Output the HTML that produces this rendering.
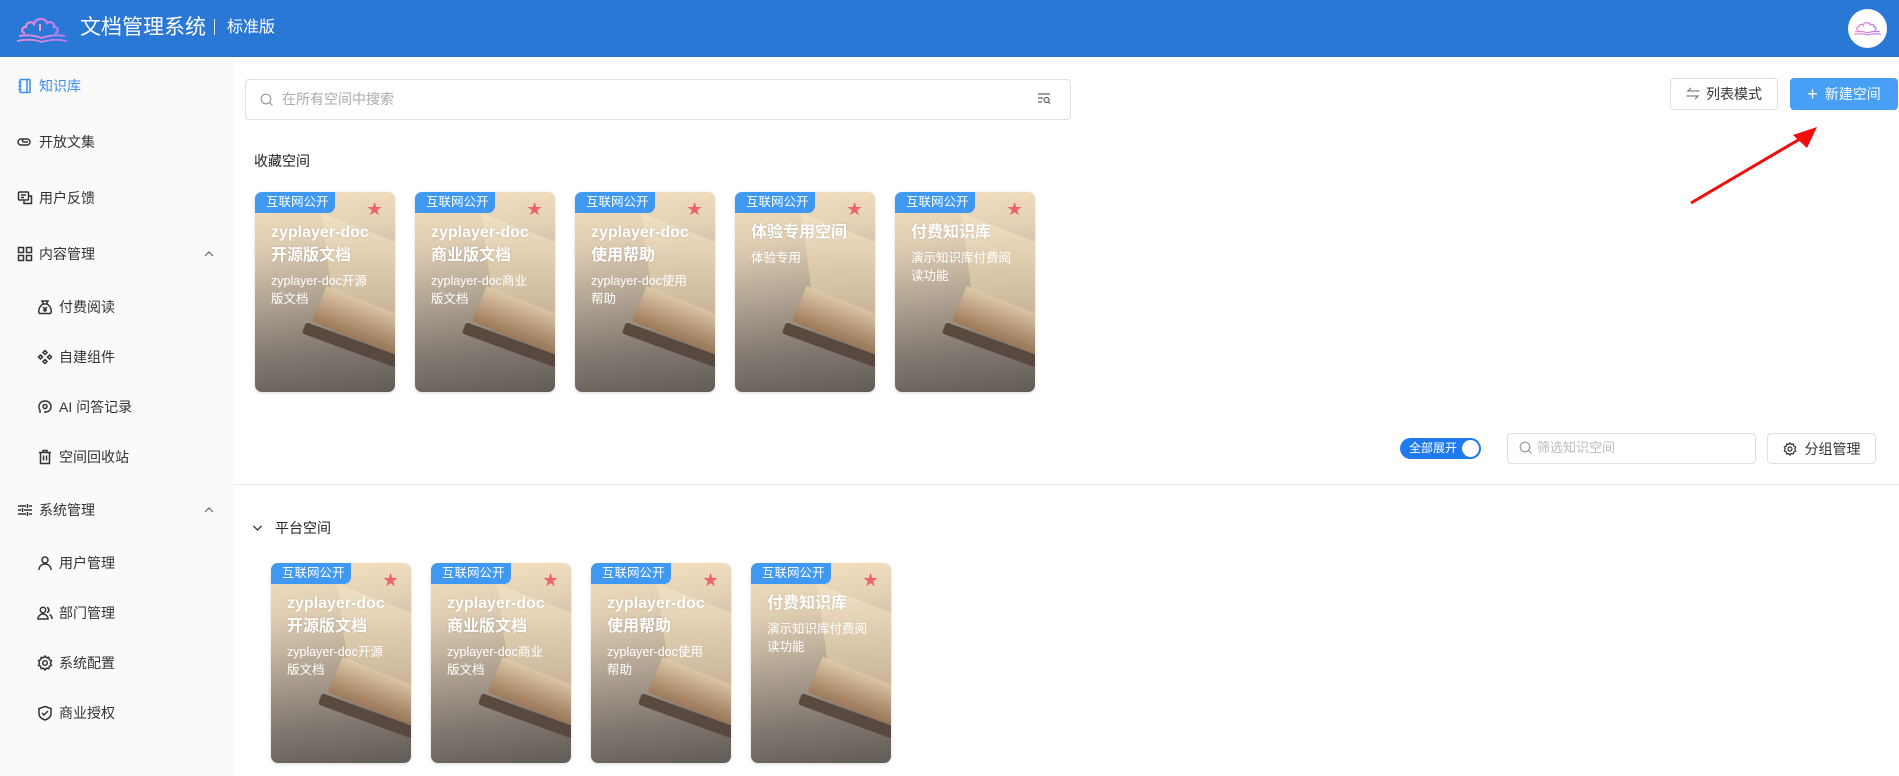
<!DOCTYPE html>
<html><head><meta charset="utf-8"><style>
*{margin:0;padding:0;box-sizing:border-box}
body{width:1899px;height:776px;overflow:hidden;background:#fff;font-family:"Liberation Sans","Noto Sans CJK SC",sans-serif;position:relative;color:#333}
.abs{position:absolute}
.hdr{left:0;top:0;width:1899px;height:57px;background:#2a78d6}
.side{left:0;top:57px;width:234px;height:719px;background:#fafafa}
.mi{position:absolute;font-size:14px;color:#333;line-height:20px;display:flex;align-items:center}
.mi svg{width:16px;height:16px;margin-right:6px;fill:none;stroke:#333;stroke-width:1.5}
.chev{position:absolute;left:204px;width:10px;height:10px}
.card{position:absolute;width:140px;height:200px;border-radius:7px;overflow:hidden;
background:linear-gradient(170deg,#f2ddb4 0%,#e2cfb2 25%,#b9ab99 50%,#8e857c 75%,#6c6660 100%);box-shadow:0 1px 3px rgba(0,0,0,.15)}
.card .pg{position:absolute;left:72px;top:45px;width:110px;height:90px;background:linear-gradient(160deg,#f3e2c4,#d9bf98);transform:skewY(28deg) rotate(-8deg);opacity:.85}
.card .pg2{position:absolute;left:60px;top:115px;width:120px;height:38px;background:linear-gradient(180deg,#e8d2b0,#a8805c);transform:rotate(22deg)}
.card .cv{position:absolute;left:45px;top:152px;width:130px;height:12px;background:#5a4a40;transform:rotate(20deg);border-radius:3px}
.card .sh{position:absolute;inset:0;background:linear-gradient(180deg,rgba(255,250,240,.15),rgba(90,80,70,.1) 60%,rgba(70,64,60,.25))}
.tag{position:absolute;left:0;top:0;width:80px;height:21px;background:#3f98f2;color:#fff;font-size:12.5px;line-height:21px;padding-left:11px;border-bottom-right-radius:7px}
.star{position:absolute;left:112px;top:10px;color:#f0626a;font-size:15px;line-height:15px}
.t{position:absolute;left:16px;top:29px;width:124px;color:#fff;font-weight:bold;font-size:16px;line-height:23px;text-shadow:0 0 2px rgba(0,0,0,.15)}
.d{position:absolute;left:16px;top:82px;width:120px;color:#fff;font-size:12.5px;line-height:18px}
.btn{position:absolute;height:32px;border:1px solid #dcdfe6;border-radius:4px;font-size:14px;display:flex;align-items:center;justify-content:center;color:#333;background:#fff}
</style></head><body>
<div class="abs hdr"></div>
<svg class="abs" style="left:15px;top:14px" width="56" height="30" viewBox="0 0 56 30">
<defs><linearGradient id="g" x1="0" x2="1"><stop offset="0" stop-color="#f08bd0"/><stop offset="1" stop-color="#b67ef0"/></linearGradient></defs>
<path d="M10 19 C6 19 6 13 11 13 C11 8 17 7 19 10 C20 4 30 3 32 9 C35 7 40 9 39 13 C44 13 44 19 40 19" fill="none" stroke="url(#g)" stroke-width="2.2"/>
<path d="M25 10 V17" stroke="#f6a0d8" stroke-width="2"/>
<path d="M4 22 Q16 20 27 24 Q38 20 50 22 M2 27 Q15 24 27 28 Q39 24 52 27" fill="none" stroke="url(#g)" stroke-width="1.8"/>
</svg>
<div class="abs" style="left:80px;top:14px;color:#fff;font-size:21px;line-height:28px">文档管理系统</div>
<div class="abs" style="left:214px;top:19px;width:1px;height:16px;background:#fff;opacity:.8"></div>
<div class="abs" style="left:227px;top:16px;color:#fff;font-size:16px;line-height:24px">标准版</div>
<div class="abs" style="left:1848px;top:9px;width:39px;height:39px;border-radius:50%;background:#fff"></div>
<svg class="abs" style="left:1853px;top:18px" width="30" height="20" viewBox="0 0 56 30"><path d="M10 19 C6 19 6 13 11 13 C11 8 17 7 19 10 C20 4 30 3 32 9 C35 7 40 9 39 13 C44 13 44 19 40 19" fill="none" stroke="url(#g)" stroke-width="2.5"/><path d="M4 22 Q16 20 27 24 Q38 20 50 22 M2 27 Q15 24 27 28 Q39 24 52 27" fill="none" stroke="url(#g)" stroke-width="2.2"/></svg>

<div class="abs side"></div>
<div class="mi" style="left:17px;top:76px;color:#3a8ef0"><svg viewBox="0 0 16 16" style="stroke:#3a8ef0"><rect x="3" y="1.5" width="10" height="13" rx="1"/><path d="M1.5 4.5h3M1.5 8h3M1.5 11.5h3M10 2v12"/></svg>知识库</div>
<div class="mi" style="left:17px;top:132px"><svg viewBox="0 0 16 16"><path d="M6 5H4a3 3 0 0 0 0 6h6a3 3 0 0 0 0-6H7a1.5 1.5 0 0 0 0 3h4"/></svg>开放文集</div>
<div class="mi" style="left:17px;top:188px"><svg viewBox="0 0 16 16"><rect x="1.5" y="2" width="10" height="8" rx="1"/><path d="M4 5h5M4 7.5h3M12 6h2.5v7.5H7V11"/></svg>用户反馈</div>
<div class="mi" style="left:17px;top:244px"><svg viewBox="0 0 16 16"><rect x="1.5" y="1.5" width="5" height="5"/><rect x="9.5" y="1.5" width="5" height="5"/><rect x="1.5" y="9.5" width="5" height="5"/><rect x="9.5" y="9.5" width="5" height="5"/></svg>内容管理</div>
<svg class="chev" style="top:249px" viewBox="0 0 10 10"><path d="M1 7l4-4 4 4" fill="none" stroke="#666" stroke-width="1.2"/></svg>
<div class="mi" style="left:37px;top:297px"><svg viewBox="0 0 16 16"><path d="M5 2h6l-1.5 3h-3z"/><path d="M6 5C1 8 1 14.5 3 14.5h10c2 0 2-6.5-3-9.5"/><path d="M6 8l2 2 2-2M8 10v3M6 11h4"/></svg>付费阅读</div>
<div class="mi" style="left:37px;top:347px"><svg viewBox="0 0 16 16"><path d="M8 1.5l2 2-2 2-2-2zM8 10.5l2 2-2 2-2-2zM3.5 6l2 2-2 2-2-2zM12.5 6l2 2-2 2-2-2z"/></svg>自建组件</div>
<div class="mi" style="left:37px;top:397px"><svg viewBox="0 0 16 16"><path d="M3 14v-3C1 9 1.5 2 8 2c4 0 6 3 6 5.5 0 4-3 5.5-6 5.5V14"/><circle cx="8" cy="7.5" r="2"/></svg>AI 问答记录</div>
<div class="mi" style="left:37px;top:447px"><svg viewBox="0 0 16 16"><path d="M2 3.5h12M6 3.5V1.5h4v2M3.5 3.5v11h9v-11M6.5 6.5v5M9.5 6.5v5"/></svg>空间回收站</div>
<div class="mi" style="left:17px;top:500px"><svg viewBox="0 0 16 16"><path d="M1 4h8M12 4h3M1 8h3M7 8h8M1 12h8M12 12h3M10.5 2v4M5.5 6v4M10.5 10v4"/></svg>系统管理</div>
<svg class="chev" style="top:505px" viewBox="0 0 10 10"><path d="M1 7l4-4 4 4" fill="none" stroke="#666" stroke-width="1.2"/></svg>
<div class="mi" style="left:37px;top:553px"><svg viewBox="0 0 16 16"><circle cx="8" cy="5" r="3"/><path d="M2 15c0-4 3-6 6-6s6 2 6 6"/></svg>用户管理</div>
<div class="mi" style="left:37px;top:603px"><svg viewBox="0 0 16 16"><circle cx="6" cy="5" r="2.7"/><path d="M1 14c0-3 2.5-5 5-5s5 2 5 5zM10 2.5a2.6 2.6 0 0 1 0 5M12.5 9.5c1.5.7 2.5 2.2 2.5 4.5"/></svg>部门管理</div>
<div class="mi" style="left:37px;top:653px"><svg viewBox="0 0 16 16"><path d="M8 1l1.5 1.8 2.3-.4.6 2.3 2.1 1-1 2.3 1 2.3-2.1 1-.6 2.3-2.3-.4L8 15l-1.5-1.8-2.3.4-.6-2.3-2.1-1 1-2.3-1-2.3 2.1-1 .6-2.3 2.3.4z"/><circle cx="8" cy="8" r="2.3"/></svg>系统配置</div>
<div class="mi" style="left:37px;top:703px"><svg viewBox="0 0 16 16"><path d="M8 1.5l6 2v5c0 3.5-3 5.5-6 6.5-3-1-6-3-6-6.5v-5z"/><path d="M5 8l2 2 4-4"/></svg>商业授权</div>

<div class="abs" style="left:245px;top:79px;width:826px;height:41px;border:1px solid #dcdfe6;border-radius:4px"></div>
<svg class="abs" style="left:260px;top:93px" width="14" height="14" viewBox="0 0 14 14"><circle cx="6" cy="6" r="4.8" fill="none" stroke="#999" stroke-width="1.2"/><path d="M9.5 9.5l3 3" stroke="#999" stroke-width="1.2"/></svg>
<div class="abs" style="left:282px;top:89px;font-size:14px;color:#aaa;line-height:20px">在所有空间中搜索</div>
<svg class="abs" style="left:1037px;top:92px" width="14" height="14" viewBox="0 0 14 14"><path d="M1 2h12M1 6h5M1 10h4" stroke="#666" stroke-width="1.2"/><circle cx="9.5" cy="8" r="2.5" fill="none" stroke="#666" stroke-width="1.2"/><path d="M11.3 9.8l1.8 1.8" stroke="#666" stroke-width="1.2"/></svg>

<div class="btn" style="left:1670px;top:78px;width:108px"><span style="color:#666;margin-right:6px">⇋</span>列表模式</div>
<div class="btn" style="left:1790px;top:78px;width:108px;background:#479ff6;border-color:#479ff6;color:#fff"><span style="font-size:18px;margin-right:7px;font-weight:300">+</span>新建空间</div>
<svg class="abs" style="left:1680px;top:120px" width="150" height="90"><path d="M11 83 L125 16" stroke="#f20c0c" stroke-width="3"/><path d="M137 7 L113 15 L127 28 Z" fill="#f20c0c"/></svg>

<div class="abs" style="left:254px;top:151px;font-size:14px;line-height:20px;color:#222">收藏空间</div>

<div class="card" style="left:255px;top:192px"><div class="pg"></div><div class="pg2"></div><div class="cv"></div><div class="sh"></div><div class="tag">互联网公开</div><div class="star">★</div><div class="t">zyplayer-doc<br>开源版文档</div><div class="d" style="top:80px">zyplayer-doc开源<br>版文档</div></div>
<div class="card" style="left:415px;top:192px"><div class="pg"></div><div class="pg2"></div><div class="cv"></div><div class="sh"></div><div class="tag">互联网公开</div><div class="star">★</div><div class="t">zyplayer-doc<br>商业版文档</div><div class="d" style="top:80px">zyplayer-doc商业<br>版文档</div></div>
<div class="card" style="left:575px;top:192px"><div class="pg"></div><div class="pg2"></div><div class="cv"></div><div class="sh"></div><div class="tag">互联网公开</div><div class="star">★</div><div class="t">zyplayer-doc<br>使用帮助</div><div class="d" style="top:80px">zyplayer-doc使用<br>帮助</div></div>
<div class="card" style="left:735px;top:192px"><div class="pg"></div><div class="pg2"></div><div class="cv"></div><div class="sh"></div><div class="tag">互联网公开</div><div class="star">★</div><div class="t">体验专用空间</div><div class="d" style="top:57px">体验专用</div></div>
<div class="card" style="left:895px;top:192px"><div class="pg"></div><div class="pg2"></div><div class="cv"></div><div class="sh"></div><div class="tag">互联网公开</div><div class="star">★</div><div class="t">付费知识库</div><div class="d" style="top:57px">演示知识库付费阅<br>读功能</div></div>

<div class="abs" style="left:1400px;top:438px;width:81px;height:21px;border-radius:11px;background:#1f7af0"></div>
<div class="abs" style="left:1409px;top:438px;font-size:12px;line-height:21px;color:#fff">全部展开</div>
<div class="abs" style="left:1462px;top:440px;width:17px;height:17px;border-radius:50%;background:#fff"></div>
<div class="abs" style="left:1507px;top:433px;width:249px;height:31px;border:1px solid #dcdfe6;border-radius:4px"></div>
<svg class="abs" style="left:1519px;top:441px" width="14" height="14" viewBox="0 0 14 14"><circle cx="6" cy="6" r="4.8" fill="none" stroke="#999" stroke-width="1.2"/><path d="M9.5 9.5l3 3" stroke="#999" stroke-width="1.2"/></svg>
<div class="abs" style="left:1537px;top:438px;font-size:13px;line-height:20px;color:#bbb">筛选知识空间</div>
<div class="btn" style="left:1767px;top:433px;width:109px;height:31px"><svg width="14" height="14" viewBox="0 0 16 16" style="margin-right:8px"><path d="M8 1l1.5 1.8 2.3-.4.6 2.3 2.1 1-1 2.3 1 2.3-2.1 1-.6 2.3-2.3-.4L8 15l-1.5-1.8-2.3.4-.6-2.3-2.1-1 1-2.3-1-2.3 2.1-1 .6-2.3 2.3.4z" fill="none" stroke="#333" stroke-width="1.4"/><circle cx="8" cy="8" r="2.3" fill="none" stroke="#333" stroke-width="1.4"/></svg>分组管理</div>
<div class="abs" style="left:234px;top:484px;width:1665px;height:1px;background:#ebeef5"></div>

<svg class="abs" style="left:252px;top:523px" width="11" height="10" viewBox="0 0 10 10"><path d="M1 3l4 4 4-4" fill="none" stroke="#333" stroke-width="1.3"/></svg>
<div class="abs" style="left:275px;top:518px;font-size:14px;line-height:20px;color:#222">平台空间</div>

<div class="card" style="left:271px;top:563px"><div class="pg"></div><div class="pg2"></div><div class="cv"></div><div class="sh"></div><div class="tag">互联网公开</div><div class="star">★</div><div class="t">zyplayer-doc<br>开源版文档</div><div class="d" style="top:80px">zyplayer-doc开源<br>版文档</div></div>
<div class="card" style="left:431px;top:563px"><div class="pg"></div><div class="pg2"></div><div class="cv"></div><div class="sh"></div><div class="tag">互联网公开</div><div class="star">★</div><div class="t">zyplayer-doc<br>商业版文档</div><div class="d" style="top:80px">zyplayer-doc商业<br>版文档</div></div>
<div class="card" style="left:591px;top:563px"><div class="pg"></div><div class="pg2"></div><div class="cv"></div><div class="sh"></div><div class="tag">互联网公开</div><div class="star">★</div><div class="t">zyplayer-doc<br>使用帮助</div><div class="d" style="top:80px">zyplayer-doc使用<br>帮助</div></div>
<div class="card" style="left:751px;top:563px"><div class="pg"></div><div class="pg2"></div><div class="cv"></div><div class="sh"></div><div class="tag">互联网公开</div><div class="star">★</div><div class="t">付费知识库</div><div class="d" style="top:57px">演示知识库付费阅<br>读功能</div></div>
</body></html>
